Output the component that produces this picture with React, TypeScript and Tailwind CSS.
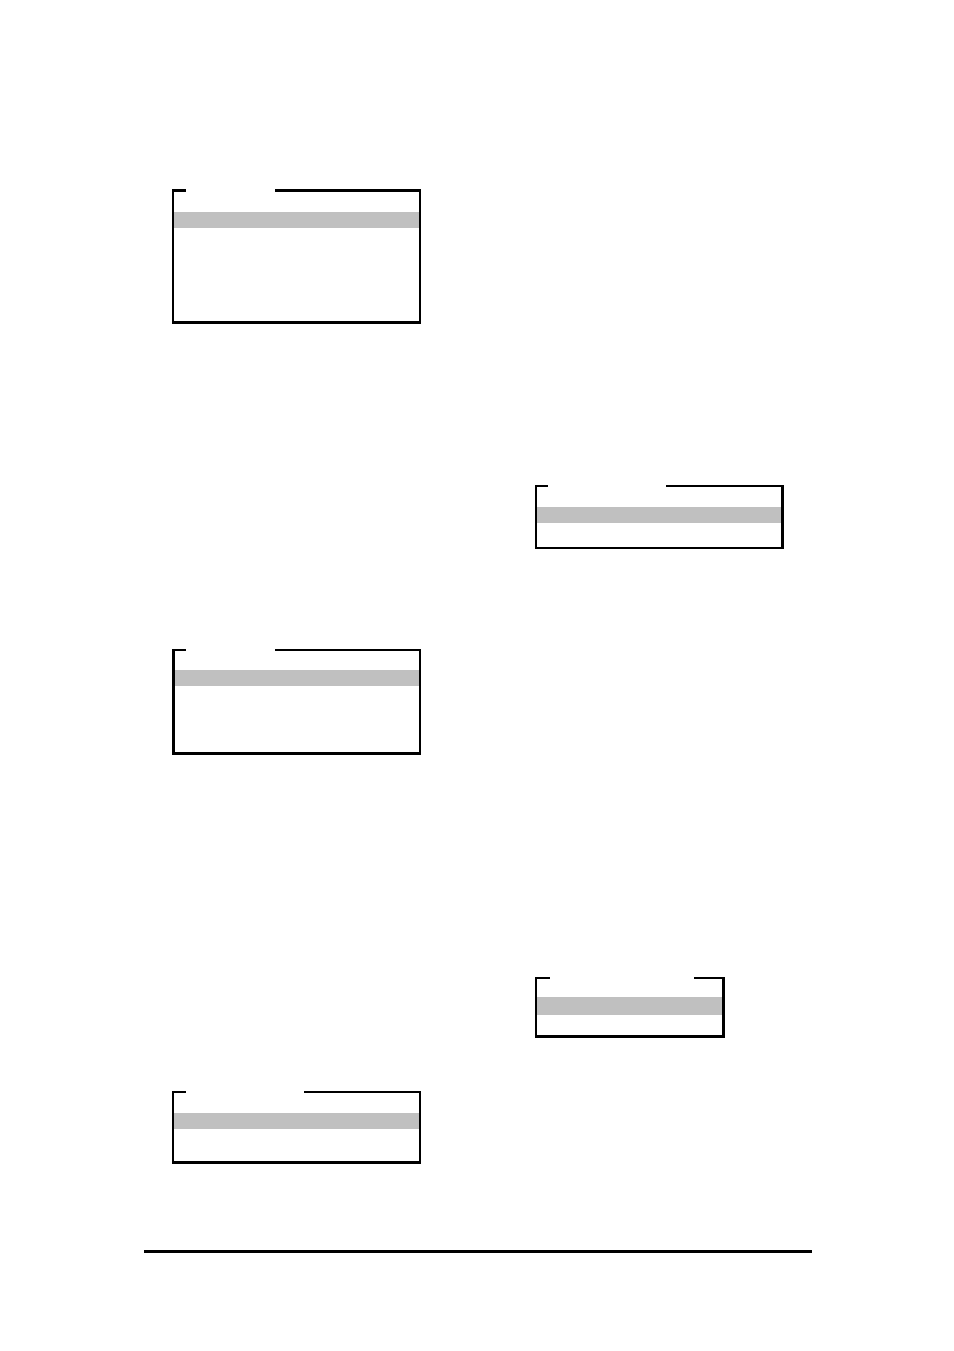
import clsx from "clsx";

type MenuBoxProps = {
    className?: string;
    // thickness of the top line
    line: string;
    // side and bottom borders
    frame: string;
    lead: string;
    gap: string;
    // space above the bar, then the bar's own height
    bar: string;
    rest: string;
};

const MenuBox = ({ className, line, frame, lead, gap, bar, rest }: MenuBoxProps) => {
    return (
        <section className={className}>
            <div className="flex">
                <div className={clsx("bg-black", line, lead)} />
                <div className={gap} />
                <div className={clsx("flex-1 bg-black", line)} />
            </div>
            <div className={clsx("border-black", frame)}>
                <div className={clsx("bg-[#c0c0c0] bg-clip-content", bar)} />
                <div className={rest} />
            </div>
        </section>
    );
};

const App = () => {
    return (
        <main className="min-h-screen bg-white pr-[142px] pb-[98px] pl-36">
            <div className="grid grid-cols-2 gap-x-[114px] px-7">
                <div className="pt-[189px]">
                    <MenuBox
                        line="h-[3px]"
                        frame="border-x-2 border-b-3"
                        lead="w-3.5"
                        gap="w-[89px]"
                        bar="h-9 pt-5"
                        rest="h-[93px]"
                    />
                    <MenuBox
                        className="mt-[325px]"
                        line="h-0.5"
                        frame="border-r-2 border-b-3 border-l-3"
                        lead="w-3.5"
                        gap="w-[89px]"
                        bar="h-[35px] pt-[19px]"
                        rest="h-[66px]"
                    />
                    <MenuBox
                        className="mt-[336px]"
                        line="h-0.5"
                        frame="border-x-2 border-b-3"
                        lead="w-3.5"
                        gap="w-[118px]"
                        bar="h-9 pt-5"
                        rest="h-8"
                    />
                </div>
                <div className="pt-[485px]">
                    <MenuBox
                        line="h-0.5"
                        frame="border-r-3 border-b-2 border-l-2"
                        lead="w-[13px]"
                        gap="w-[118px]"
                        bar="h-9 pt-5"
                        rest="h-6"
                    />
                    <MenuBox
                        className="mt-[428px] w-[190px]"
                        line="h-0.5"
                        frame="border-r-3 border-b-3 border-l-2"
                        lead="w-[15px]"
                        gap="w-36"
                        bar="h-9 pt-[18px]"
                        rest="h-5"
                    />
                </div>
            </div>
            <hr className="mt-[86px] border-t-3 border-black" />
        </main>
    );
};

export default App;
